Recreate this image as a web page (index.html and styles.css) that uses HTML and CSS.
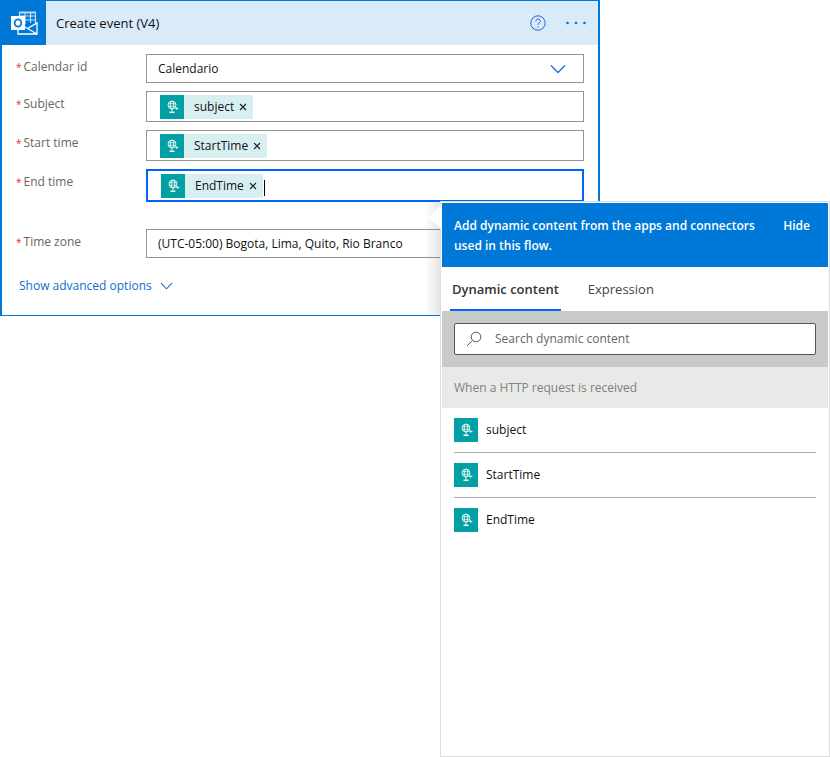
FILE: index.html
```html
<!DOCTYPE html>
<html lang="en">
<head>
<meta charset="utf-8">
<meta name="viewport" content="width=device-width, initial-scale=1">
<title>Create event (V4)</title>
<link rel="stylesheet" href="styles.css">
</head>
<body>
<svg class="defs" aria-hidden="true">
  <symbol id="globe" viewBox="0 0 24 24">
    <g fill="none" stroke="#fff" stroke-width="0.8">
      <circle cx="12" cy="10" r="4"/>
      <ellipse cx="12" cy="10" rx="1.800" ry="4"/>
      <path d="M8 8.700h8M8 11.300h8M12 14v3M15.200 13.500h3.300M16.700 12v3"/>
      <path d="M9.500 17.300h5" stroke-width="1.500"/>
    </g>
  </symbol>
  <symbol id="chevron" viewBox="0 0 16 10">
    <path d="M1 1.500l7 7 7-7" fill="none" stroke="currentColor" stroke-width="1.300"/>
  </symbol>
</svg>
<main class="card">
  <header class="card-header">
    <span class="app-icon">
      <svg viewBox="0 0 28 26" width="28" height="26" aria-hidden="true">
        <g fill="none" stroke="#c9e2f7" stroke-width="1.100">
          <path d="M9.500 7V2M25.500 2v12M9 6h17M9 10h17M15 2v12M20.500 2v11"/>
        </g>
        <path d="M9 1.500h17v2H9z" fill="#b9d9f4"/>
        <g fill="none" stroke="#fff" stroke-width="1.300">
          <path d="M8 20v4h19V13l-9.500 5.500L15 17M17.500 18.500L27 24"/>
        </g>
        <path d="M1 6h14v14H1z" fill="#fff"/>
        <ellipse cx="8" cy="13" rx="3.300" ry="3.700" fill="none" stroke="#0078d7" stroke-width="1.800"/>
      </svg>
    </span>
    <h1>Create event (V4)</h1>
    <button class="icon-button" type="button" aria-label="Help">
      <svg viewBox="0 0 16 16" width="16" height="16" fill="none" stroke="#2266e3">
        <circle cx="8" cy="8" r="7.200"/>
        <path d="M5.800 6.300c0-3 4.500-3 4.500-.1C10.300 8 8 7.900 8 10M8 11.200v1.300"/>
      </svg>
    </button>
    <button class="icon-button" type="button" aria-label="Menu">
      <svg viewBox="0 0 20 4" width="20" height="4" fill="#0b6fd0"><circle cx="1.500" cy="2" r="1.300"/><circle cx="10" cy="2" r="1.300"/><circle cx="18.500" cy="2" r="1.300"/></svg>
    </button>
  </header>
  <form class="fields">
    <div class="row">
      <label for="calendar"><span class="star">*</span>Calendar id</label>
      <div class="select-wrap">
        <select id="calendar"><option>Calendario</option></select>
        <svg class="select-arrow" aria-hidden="true"><use href="#chevron"/></svg>
      </div>
    </div>
    <div class="row">
      <span class="label" id="l-subject"><span class="star">*</span>Subject</span>
      <div class="token-box" role="group" aria-labelledby="l-subject">
        <span class="token"><svg class="globe"><use href="#globe"/></svg>subject<button type="button" aria-label="Remove subject"><svg viewBox="0 0 8 8"><path d="M1 1l6 6M7 1L1 7"/></svg></button></span>
      </div>
    </div>
    <div class="row">
      <span class="label" id="l-start"><span class="star">*</span>Start time</span>
      <div class="token-box" role="group" aria-labelledby="l-start">
        <span class="token"><svg class="globe"><use href="#globe"/></svg>StartTime<button type="button" aria-label="Remove StartTime"><svg viewBox="0 0 8 8"><path d="M1 1l6 6M7 1L1 7"/></svg></button></span>
      </div>
    </div>
    <div class="row row-active">
      <span class="label" id="l-end"><span class="star">*</span>End time</span>
      <div class="token-box active" role="group" aria-labelledby="l-end">
        <span class="token"><svg class="globe"><use href="#globe"/></svg>EndTime<button type="button" aria-label="Remove EndTime"><svg viewBox="0 0 8 8"><path d="M1 1l6 6M7 1L1 7"/></svg></button></span><span class="caret"></span>
        <section class="flyout" aria-label="Dynamic content">
          <header class="flyout-header">
            <p>Add dynamic content from the apps and connectors used in this flow.</p>
            <button type="button">Hide</button>
          </header>
          <nav class="tabs">
            <button type="button" class="tab selected">Dynamic content</button>
            <button type="button" class="tab">Expression</button>
          </nav>
          <div class="search">
            <div class="search-box">
              <svg viewBox="0 0 16 16" width="16" height="16" fill="none" stroke="#555" aria-hidden="true"><circle cx="10" cy="6" r="4.800"/><path d="M6.500 9.500L1 15"/></svg>
              <input type="search" aria-label="Search dynamic content" placeholder="Search dynamic content">
            </div>
          </div>
          <h2>When a HTTP request is received</h2>
          <ul>
            <li><button type="button"><svg class="globe"><use href="#globe"/></svg>subject</button></li>
            <li><button type="button"><svg class="globe"><use href="#globe"/></svg>StartTime</button></li>
            <li><button type="button"><svg class="globe"><use href="#globe"/></svg>EndTime</button></li>
          </ul>
        </section>
      </div>
    </div>
    <div class="row">
      <label for="zone"><span class="star">*</span>Time zone</label>
      <select id="zone"><option>(UTC-05:00) Bogota, Lima, Quito, Rio Branco</option></select>
    </div>
    <button class="advanced" type="button">Show advanced options<svg><use href="#chevron"/></svg></button>
  </form>
</main>
</body>
</html>
```
FILE: styles.css
```css
* { box-sizing: border-box; }
body {
  min-height: 100vh;
  margin: 0;
  background: #fff;
  color: #111;
  font: 12px/16px "Open Sans", "Noto Sans", sans-serif;
}
button, input, select { font: inherit; color: inherit; }
button { margin: 0; padding: 0; border: 0; background: none; cursor: pointer; }
.defs { position: absolute; width: 0; height: 0; }

.card {
  max-width: 600px;
  border: solid #0078d7;
  border-width: 1px 2px;
}
.card-header {
  display: flex;
  align-items: center;
  height: 44px;
  padding-right: 12px;
  background: #d9eaf8;
}
.app-icon {
  display: flex;
  align-items: center;
  justify-content: center;
  width: 44px;
  height: 44px;
  background: #0078d7;
}
h1 { flex: 1; margin: 0 0 0 10px; font-size: 13px; font-weight: 400; }
.icon-button { display: flex; margin-left: 20px; }

.fields { padding: 9px 14px 21px; }
.row { display: flex; margin-bottom: 8px; }
.row-active { margin-bottom: 27px; }
label, .label { width: 130px; padding-top: 5px; flex: none; color: #666; }
.star { margin-right: 2px; color: #e03030; font-size: 10px; }

select {
  appearance: none;
  flex: 1;
  min-width: 0;
  width: 100%;
  height: 29px;
  padding: 0 11px;
  border: 1px solid #949494;
  border-radius: 0;
  background: #fff;
  color: #111;
}
.select-wrap { position: relative; flex: 1; }
.select-wrap select { display: block; }
.select-arrow {
  position: absolute;
  top: 10px;
  right: 18px;
  width: 16px;
  height: 10px;
  color: #2266e3;
  pointer-events: none;
}

.token-box {
  position: relative;
  flex: 1;
  display: flex;
  align-items: center;
  height: 31px;
  padding: 0 13px;
  border: 1px solid #949494;
}
.token-box.active { height: 33px; padding: 0 13px; border: 2px solid #0062ff; }
.globe { flex: none; width: 24px; height: 24px; background: #00a0a4; }
.token { display: flex; align-items: center; height: 24px; background: #d8eff1; }
.token .globe { margin-right: 10px; }
.token button { display: flex; padding: 0 6px 0 5px; }
.token button svg { width: 8px; height: 8px; fill: none; stroke: #222; stroke-width: 1.2; }
.caret { width: 1px; height: 16px; margin: 4px 0 0 1px; background: #000; }

.advanced {
  display: flex;
  align-items: center;
  gap: 8px;
  margin: 20px 0 0 3px;
  color: #0b6fd0;
}
.advanced svg { width: 13px; height: 8px; }

.flyout {
  position: absolute;
  z-index: 2;
  top: 30px;
  left: 292px;
  width: 390px;
  height: 556px;
  padding: 1px;
  border: 1px solid #dcdcdc;
  background: #fff;
}
/* soft shade stays within the card, beside the pointer */
.flyout::before {
  content: "";
  position: absolute;
  z-index: -1;
  top: 0;
  left: -16px;
  width: 15px;
  height: 113px;
  background: linear-gradient(to right, rgba(0, 0, 0, 0), rgba(0, 0, 0, 0.1));
}
.flyout::after {
  content: "";
  position: absolute;
  top: 3px;
  left: -12px;
  width: 12px;
  height: 24px;
  background: #fff;
  clip-path: polygon(100% 0, 100% 100%, 0 50%);
}
.flyout-header {
  display: flex;
  justify-content: space-between;
  align-items: flex-start;
  height: 64px;
  padding: 13px 18px 11px 12px;
  background: #0078d7;
  color: #fff;
  font-size: 12px;
  font-weight: 600;
  line-height: 20px;
}
.flyout-header p { flex: none; width: 310px; margin: 0; }
.tabs { display: flex; gap: 25px; height: 44px; padding-left: 8px; font-size: 13px; color: #444; }
.tab { padding: 2px 2px 0; border-bottom: 2px solid transparent; }
.tab.selected { border-color: #0062ff; color: #333; font-weight: 600; }
.search { padding: 12px; background: #c8cac7; }
.search-box {
  display: flex;
  align-items: center;
  gap: 13px;
  height: 32px;
  padding: 0 11px;
  border: 1px solid #555;
  border-radius: 2px;
  background: #fff;
}
.search-box input { flex: 1; min-width: 0; padding: 0; border: 0; outline: 0; background: none; font-size: 12px; }
.search-box input::placeholder { color: #666; opacity: 1; }
h2 { margin: 0; padding: 0 12px; background: #e8eae7; color: #808080; font-size: 12px; font-weight: 400; line-height: 41px; }
ul { margin: 0; padding: 0 12px; list-style: none; }
li { height: 45px; border-bottom: 1px solid #aaa; }
li:last-child { border-bottom: 0; }
li button { display: flex; align-items: center; gap: 8px; width: 100%; height: 44px; }
```
